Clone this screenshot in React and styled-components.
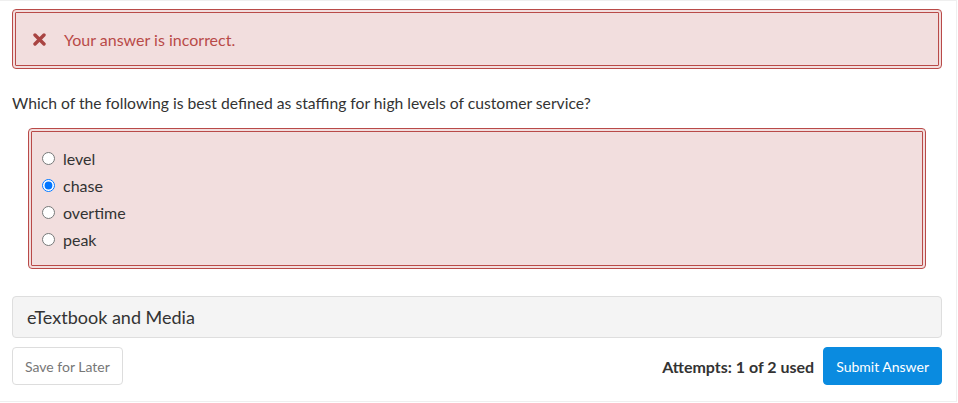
import React from 'react';
import styled, { createGlobalStyle } from 'styled-components';

const GlobalStyle = createGlobalStyle`
  html, body {
    margin: 0;
    padding: 0;
    background: #fff;
  }
  body {
    font-family: Lato, "Open Sans", Arial, sans-serif;
    color: #333;
  }
`;

const Page = styled.div`
  box-sizing: border-box;
  width: 957px;
  height: 402px;
  border-top: 1px solid #efefef;
  border-right: 1px solid #efefef;
  border-bottom: 1px solid #efefef;
  padding: 8px 14px 0 12px;
`;

const Alert = styled.div`
  box-sizing: border-box;
  height: 60px;
  display: flex;
  align-items: center;
  gap: 18px;
  padding-left: 17px;
  background: #f2dede;
  border: 4px double #b94a48;
  border-radius: 4px;
  color: #b94a48;
  font-size: 16px;
`;

const Question = styled.p`
  margin: 24px 0 0;
  font-size: 15.7px;
  line-height: 20px;
  color: #333;
`;

const Choices = styled.div`
  box-sizing: border-box;
  margin: 15px 16px 0 16px;
  height: 141px;
  padding: 13px 0 0 10px;
  background: #f2dede;
  border: 4px double #b94a48;
  border-radius: 4px;
`;

const Choice = styled.label`
  display: flex;
  align-items: center;
  height: 27px;
  font-size: 16px;
  color: #333;

  input {
    margin: 0 8px 0 0;
    width: 13px;
    height: 13px;
  }
`;

const Media = styled.div`
  box-sizing: border-box;
  margin-top: 27px;
  height: 42px;
  display: flex;
  align-items: center;
  padding-left: 14px;
  background: #f4f4f4;
  border: 1px solid #dedede;
  border-radius: 4px;
  font-size: 18px;
  color: #333;
`;

const Footer = styled.div`
  display: flex;
  align-items: center;
  margin-top: 9px;
`;

const Attempts = styled.span`
  margin-left: auto;
  margin-right: 9px;
  font-size: 16px;
  font-weight: bold;
  color: #333;
`;

const Button = styled.button`
  box-sizing: border-box;
  height: 38px;
  padding: 0 12px;
  font-family: inherit;
  font-size: 14px;
  border-radius: 4px;
  border: 1px solid ${p => (p.primary ? '#0a8be0' : '#dddddd')};
  background: ${p => (p.primary ? '#0a8be0' : '#fff')};
  color: ${p => (p.primary ? '#fff' : '#777')};
  cursor: pointer;
`;

const CrossIcon = () => (
  <svg width="13" height="13" viewBox="0 0 13 13">
    <path d="M2 2 L11 11 M11 2 L2 11" stroke="#a94442" strokeWidth="3.4" strokeLinecap="round" />
  </svg>
);

const options = ['level', 'chase', 'overtime', 'peak'];

const App = () => (
  <>
    <GlobalStyle />
    <Page>
      <Alert>
        <CrossIcon />
        <span>Your answer is incorrect.</span>
      </Alert>
      <Question>Which of the following is best defined as staffing for high levels of customer service?</Question>
      <Choices>
        {options.map(o => (
          <Choice key={o}>
            <input type="radio" name="answer" defaultChecked={o === 'chase'} />
            {o}
          </Choice>
        ))}
      </Choices>
      <Media>eTextbook and Media</Media>
      <Footer>
        <Button>Save for Later</Button>
        <Attempts>Attempts: 1 of 2 used</Attempts>
        <Button primary>Submit Answer</Button>
      </Footer>
    </Page>
  </>
);

export default App;
